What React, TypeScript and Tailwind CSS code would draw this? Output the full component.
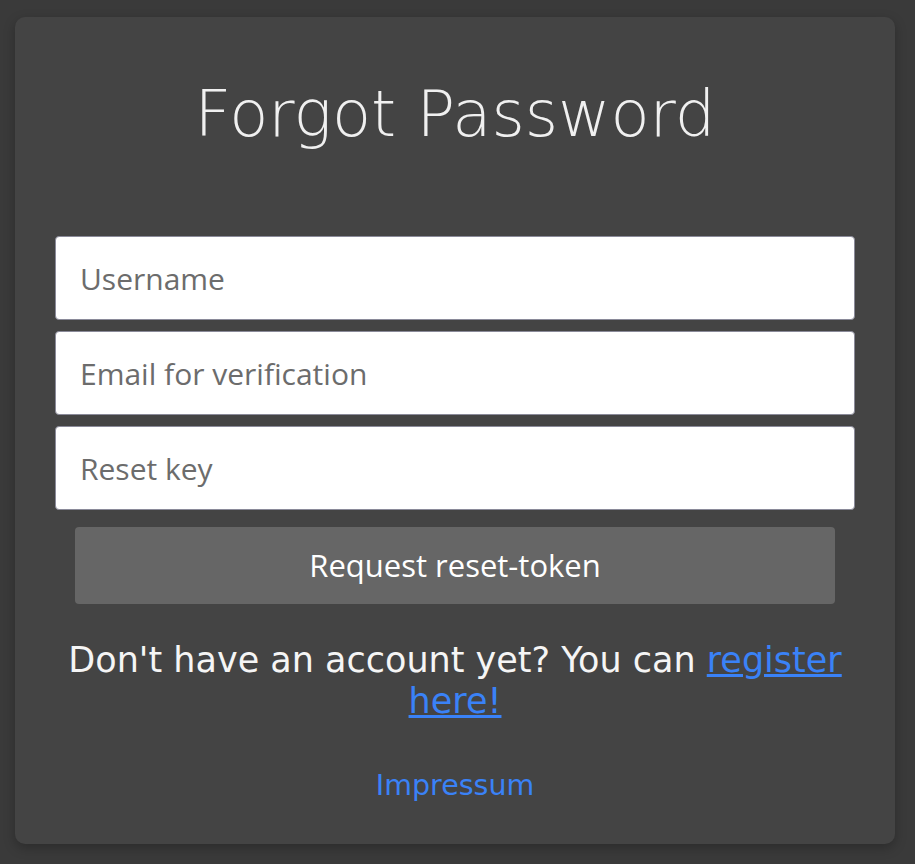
export default function App() {
  return (
    <div className="min-h-screen bg-[#3a3a3a] pt-[17px] pb-[20px]">
      <div className="ml-[15px] mr-[20px] h-[827px] rounded-[10px] bg-[#444444] shadow-[0_4px_12px_rgba(0,0,0,0.25)] px-[40px] flex flex-col">
        <h1
          className="mt-[47px] h-[100px] text-center text-[64px] leading-[100px] text-[#f0f0f0] font-extralight"
          style={{ fontFamily: '"DejaVu Sans", sans-serif' }}
        >
          Forgot Password
        </h1>

        <form className="mt-[72px] flex flex-col gap-[11px]" style={{ fontFamily: '"Open Sans", "Noto Sans", sans-serif' }}>
          <input
            type="text"
            placeholder="Username"
            className="h-[84px] w-full rounded-[4px] border border-[#8a8a99] bg-white px-[24px] text-[30px] text-[#333] placeholder:text-[#6c6c6c] outline-none"
          />
          <input
            type="email"
            placeholder="Email for verification"
            className="h-[84px] w-full rounded-[4px] border border-[#8a8a99] bg-white px-[24px] text-[30px] text-[#333] placeholder:text-[#6c6c6c] outline-none"
          />
          <input
            type="text"
            placeholder="Reset key"
            className="h-[84px] w-full rounded-[4px] border border-[#8a8a99] bg-white px-[24px] text-[30px] text-[#333] placeholder:text-[#6c6c6c] outline-none"
          />
          <button
            type="button"
            className="mx-[20px] mt-[6px] h-[77px] rounded-[4px] bg-[#666666] text-[31px] text-white"
          >
            Request reset-token
          </button>
        </form>

        <p
          className="mt-[36px] text-center text-[35px] leading-[41px] text-[#f5f5f5]"
          style={{ fontFamily: '"DejaVu Sans", sans-serif' }}
        >
          Don't have an account yet? You can{' '}
          <a href="#" className="text-[#3a82f7] underline">
            register here!
          </a>
        </p>

        <div className="mt-[43px] text-center" style={{ fontFamily: '"DejaVu Sans", sans-serif' }}>
          <a href="#" className="text-[28.5px] text-[#3a82f7]">
            Impressum
          </a>
        </div>
      </div>
    </div>
  );
}
